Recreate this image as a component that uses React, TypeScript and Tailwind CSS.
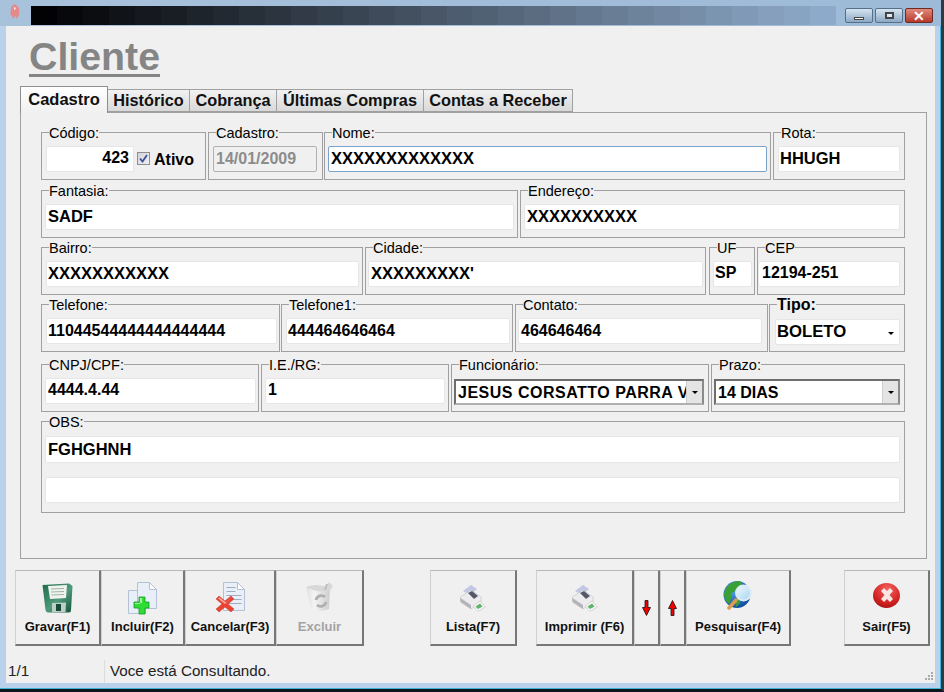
import type { ReactNode } from 'react';

const FONT = "font-['Liberation_Sans',Arial,sans-serif]";

// title bar fades from black to the frame blue in visible steps
const bands = Array.from({ length: 31 }, (_, i) => {
  const t = i / 30;
  const r = Math.round(2 + t * 140);
  const g = Math.round(2 + t * 168);
  const b = Math.round(4 + t * 198);
  return `rgb(${r},${g},${b})`;
});

function Group({ label, className, labelClass, children }: { label: string; className: string; labelClass?: string; children?: ReactNode }) {
  return (
    <div className={`relative border border-[#a0a0a0] h-[48px] pt-[13px] ${className}`}>
      <span className={`absolute -top-[7px] left-[7px] bg-[#f0f0f0] leading-[14px] ${labelClass ?? 'text-[14.5px]'} text-black whitespace-nowrap`}>{label}</span>
      {children}
    </div>
  );
}

function Input({ value, className, right, wide }: { value: string; className: string; right?: boolean; wide?: boolean }) {
  return (
    <div className={`h-[26px] bg-white border border-[#e6e6e6] rounded-[2px] font-bold text-black leading-[22px] px-[2px] whitespace-nowrap overflow-hidden ${wide ? 'text-[16.5px]' : 'text-[16px]'} ${right ? 'text-right pr-[4px]' : ''} ${className}`}>
      {value}
    </div>
  );
}

function Combo({ value, className, textClass }: { value: string; className: string; textClass?: string }) {
  return (
    <div className={`h-[26px] flex bg-white border-2 border-t-[#6e6e6e] border-l-[#6e6e6e] border-b-[#b0b0b0] border-r-[#8a8a8a] ${className}`}>
      <div className={`flex-1 overflow-hidden whitespace-nowrap text-[16px] font-bold leading-[24px] pl-[2px] ${textClass ?? ''}`}>{value}</div>
      <div className="w-[16px] bg-[#e4e4e4] border-l border-[#cfcfcf] flex items-center justify-center">
        <div className="w-0 h-0 border-l-[3px] border-r-[3px] border-t-[3px] border-l-transparent border-r-transparent border-t-black" />
      </div>
    </div>
  );
}

function ToolButton({ label, className, disabled, children }: { label?: string; className: string; disabled?: boolean; children?: ReactNode }) {
  return (
    <div className={`h-[76px] shrink-0 flex flex-col items-center bg-[#f0f0f0] border-t border-l border-t-[#b8b8b8] border-l-[#d0d0d0] border-r-2 border-b-2 border-r-[#777] border-b-[#777] ${className}`}>
      <div className="h-[44px] flex items-end justify-center">{children}</div>
      {label && <span className={`mt-[5px] text-[13px] font-bold leading-[14px] whitespace-nowrap ${disabled ? 'text-[#a3a3a3]' : 'text-[#111]'}`}>{label}</span>}
    </div>
  );
}

function Floppy() {
  return (
    <svg width="31" height="30" viewBox="0 0 31 30" className="mb-[2px]">
      <defs>
        <linearGradient id="disk" x1="0" y1="0" x2="1" y2="1">
          <stop offset="0%" stopColor="#1f6a4a" />
          <stop offset="55%" stopColor="#4f9a7a" />
          <stop offset="100%" stopColor="#14503a" />
        </linearGradient>
      </defs>
      <path d="M0.5 2 L27 0.5 L30.5 3 L29 27 Q29 29.5 27 29.5 L6 29.5 Q4 29.5 3.5 27 Z" fill="url(#disk)" />
      <path d="M6 3 L25 2 L24 15 L8 16 Z" fill="#f0f4f0" />
      <path d="M9 6 L22 5.5 M9 9 L22 8.5 M9.5 12 L22 11.5" stroke="#9fb0a6" />
      <path d="M10 20 L24 19.5 L23.5 29 L10 29 Z" fill="#bcd0c6" />
      <path d="M14 21 L19 21 L19 28 L14 28 Z" fill="#17493a" />
    </svg>
  );
}

function Sheet({ x, y, w, h, lines }: { x: number; y: number; w: number; h: number; lines?: boolean }) {
  return (
    <g>
      <path d={`M${x} ${y} H${x + w - 7} L${x + w} ${y + 7} V${y + h} H${x} Z`} fill="#e9eff8" stroke="#b4c0d4" />
      <path d={`M${x + w - 7} ${y} V${y + 7} H${x + w} Z`} fill="#fff" stroke="#b4c0d4" />
      {lines && <path d={`M${x + 3} ${y + 5} H${x + w - 9} M${x + 3} ${y + 9} H${x + w - 9} M${x + 3} ${y + 13} H${x + w - 3} M${x + 3} ${y + 17} H${x + w - 3} M${x + 3} ${y + 21} H${x + w - 3}`} stroke="#a0adbe" />}
    </g>
  );
}

function DocPlus() {
  return (
    <svg width="30" height="33" viewBox="0 0 30 33">
      <Sheet x={0.5} y={8.5} w={17} h={23} />
      <Sheet x={9.5} y={0.5} w={19} h={26} />
      <path d="M11 15 H17 V20 H21 V26 H17 V32 H11 V26 H6 V20 H11 Z" fill="#2edc34" stroke="#159a28" strokeWidth="0.8" />
      <path d="M12 16 H14 V21 H7 V22 H12 Z" fill="#a5f2a5" />
    </svg>
  );
}

function DocX() {
  return (
    <svg width="30" height="30" viewBox="0 0 30 30" className="mb-[3px]">
      <Sheet x={8.5} y={0.5} w={21} h={28} lines />
      <path d="M1 17 L4 14 L10 19 L16 14 L19 17 L13 22 L19 27 L16 30 L10 25 L4 30 L1 27 L7 22 Z" fill="#ea4334" stroke="#c5372a" strokeWidth="0.5" />
      <path d="M3 16.5 L4.5 15.5 L11 20.5 L16 16 L10 22 Z" fill="#f7a79e" />
    </svg>
  );
}

function Bin() {
  return (
    <svg width="29" height="30" viewBox="0 0 29 30" className="mb-[3px]">
      <defs>
        <linearGradient id="binBody" x1="0" y1="0" x2="1" y2="0">
          <stop offset="0%" stopColor="#dedede" />
          <stop offset="35%" stopColor="#f4f4f4" />
          <stop offset="100%" stopColor="#cdcdcd" />
        </linearGradient>
      </defs>
      <path d="M1 5 L25 4 L24 27 Q14 31 6 27 Z" fill="url(#binBody)" />
      <path d="M1 5 Q12 1 20 5 L24 0 L28 4 L25 9 Q12 11 1 5 Z" fill="#d8d8d8" />
      <path d="M20 8 L22 2" stroke="#bdbdbd" strokeWidth="2" />
      <path d="M11 18 A5.5 5.5 0 0 1 20 15 M21 20 A5.5 5.5 0 0 1 12 23" fill="none" stroke="#b0b0b0" strokeWidth="2.8" />
    </svg>
  );
}

function PrinterIcon() {
  return (
    <svg width="26" height="28" viewBox="0 0 26 28" className="mb-[3px]">
      <path d="M3 7 L11 1 L17 5 L10 11 Z" fill="#c2c7e6" />
      <path d="M0.5 13 L11 6 L21 13 V18 L11 25 L0.5 18 Z" fill="#ececee" stroke="#b8b8b8" strokeWidth="0.5" />
      <path d="M8 9 L12 7 L18 12 L14 15 Z" fill="#55586a" />
      <path d="M0.5 18 L11 25 V21 L0.5 14 Z" fill="#b4b4b8" />
      <path d="M13 22 L20 17 L25.5 23 L18 27.5 Z" fill="#f5f5f5" stroke="#bbbbbb" strokeWidth="0.5" />
      <path d="M15.5 22.5 L20 19.5 L22.5 22.5 L18 25 Z" fill="#5fb56a" />
    </svg>
  );
}

function GlobeSearch() {
  return (
    <svg width="30" height="29" viewBox="0 0 30 29" className="mb-[5px]">
      <defs>
        <radialGradient id="globe" cx="35%" cy="30%" r="75%">
          <stop offset="0%" stopColor="#56a8ee" />
          <stop offset="100%" stopColor="#0c4a9c" />
        </radialGradient>
        <linearGradient id="lens" x1="0" y1="0" x2="1" y2="1">
          <stop offset="0%" stopColor="#f2fbff" />
          <stop offset="100%" stopColor="#a5d3f0" />
        </linearGradient>
      </defs>
      <circle cx="14" cy="13.5" r="13.5" fill="url(#globe)" />
      <path d="M3 7 Q9 -1 18 0.5 Q20 4 15 6 Q13 11 8 12 Q9 17 6 23 Q-2 16 3 7 Z" fill="#3aa036" />
      <path d="M12 18 Q17 17 17 22 L13 26 Z" fill="#3aa036" />
      <path d="M13 19 L6 27" stroke="#dd9d4e" strokeWidth="3.5" strokeLinecap="round" />
      <circle cx="20.5" cy="12" r="7.5" fill="url(#lens)" stroke="#dcecf5" strokeWidth="2" />
    </svg>
  );
}

function ExitBall() {
  return (
    <svg width="27" height="25" viewBox="0 0 27 25" className="mb-[7px]">
      <defs>
        <radialGradient id="ball" cx="55%" cy="25%" r="80%">
          <stop offset="0%" stopColor="#f4625f" />
          <stop offset="70%" stopColor="#d02020" />
          <stop offset="100%" stopColor="#a01414" />
        </radialGradient>
      </defs>
      <ellipse cx="13.5" cy="12.5" rx="13.5" ry="12.5" fill="url(#ball)" />
      <path d="M8 8 L11 5 L14 8 L17 5 L20 8 L16.5 12 L20 16 L17 19 L14 16 L11 19 L8 16 L11.5 12 Z" fill="#f8e6e4" />
    </svg>
  );
}

function RedArrow({ up }: { up?: boolean }) {
  return (
    <svg width="9" height="16" viewBox="0 0 9 16" className={`-mb-[1px] ${up ? '' : 'rotate-180'}`}>
      <path d="M4.5 0.5 L8.5 8.5 H6 V15.5 H3 V8.5 H0.5 Z" fill="#f00000" stroke="#111" strokeWidth="0.8" />
    </svg>
  );
}

function CaptionButton({ className, children }: { className: string; children: ReactNode }) {
  return (
    <div className={`w-[28px] h-[15px] flex items-center justify-center border rounded-[2px] ${className}`}>{children}</div>
  );
}

export default function App() {
  return (
    <div className={`w-[944px] h-[692px] overflow-hidden border-r-[3px] border-b-[3px] border-r-[#2b3a45] border-b-[#0e151b] ${FONT}`}>
      <div className="h-full flex flex-col bg-[#b9d1ea] shadow-[inset_-1px_-1px_0_#3fb4d4]">
        {/* title bar */}
        <div className="h-[26px] shrink-0 flex pt-[6px] bg-gradient-to-r from-[#a9c2dc] via-[#a2bdd9] to-[#9dbad8]">
          <div className="w-[31px] shrink-0 flex justify-center">
            <svg width="12" height="16" viewBox="0 0 12 16" className="-mt-[2px] -ml-[1px]">
              <path d="M4 1 Q7 -1 8 2 Q11 4 10 8 Q11 11 9 12 L8 15 L6 12 L4 15 L3 12 Q0 10 2 7 Q1 3 4 1 Z" fill="#e58a8a" />
              <path d="M5 3 Q7 3 7 5 L5 6 Z" fill="#fbdede" />
            </svg>
          </div>
          <div className="w-[805px] h-[19px] flex">
            {bands.map((c) => (
              <div key={c} className="flex-1" style={{ backgroundColor: c }} />
            ))}
          </div>
          <div className="flex pl-[9px] gap-[2px] mt-[2px]">
            <CaptionButton className="border-[#55708a] bg-gradient-to-b from-[#d5e3f0] to-[#8ea9c4]">
              <div className="w-[10px] h-[3px] mt-[6px] bg-white border border-[#444]" />
            </CaptionButton>
            <CaptionButton className="border-[#55708a] bg-gradient-to-b from-[#d5e3f0] to-[#8ea9c4]">
              <div className="w-[9px] h-[7px] bg-white/60 border-2 border-[#444]" />
            </CaptionButton>
            <CaptionButton className="border-[#6e2b22] bg-gradient-to-b from-[#e0897c] to-[#b5372a]">
              <span className="text-white text-[14px] font-bold leading-none">✕</span>
            </CaptionButton>
          </div>
        </div>

        {/* window body */}
        <div className="ml-[6px] w-[929px] h-[657px] shrink-0 bg-[#f0f0f0] flex flex-col">
          <div className="h-[60px] shrink-0 pl-[23px] pt-[9px]">
            <span className="text-[39.3px] font-bold leading-[43px] text-[#858585] underline decoration-[3px] underline-offset-[4px]">Cliente</span>
          </div>

          {/* tabs */}
          <div className="ml-[14px] h-[26px] flex items-end relative z-10 text-[16.3px] font-bold text-[#111]">
            <div className="w-[88px] h-[27px] -mb-[1px] bg-gradient-to-b from-white to-[#f0f0f0] border border-[#8e8e8e] border-b-0 text-center leading-[24px] text-[16.5px]">Cadastro</div>
            <div className="w-[82px] h-[23px] bg-gradient-to-b from-[#f2f2f2] to-[#d9d9d9] border border-[#a0a0a0] border-l-0 text-center leading-[21px]">Histórico</div>
            <div className="w-[87px] h-[23px] bg-gradient-to-b from-[#f2f2f2] to-[#d9d9d9] border border-[#a0a0a0] border-l-0 text-center leading-[21px]">Cobrança</div>
            <div className="w-[147px] h-[23px] bg-gradient-to-b from-[#f2f2f2] to-[#d9d9d9] border border-[#a0a0a0] border-l-0 text-center leading-[21px]">Últimas Compras</div>
            <div className="w-[149px] h-[23px] bg-gradient-to-b from-[#f2f2f2] to-[#d9d9d9] border border-[#a0a0a0] border-l-0 text-center leading-[21px]">Contas a Receber</div>
          </div>

          {/* tab page */}
          <div className="ml-[14px] w-[907px] h-[447px] shrink-0 border border-[#a0a0a0] pl-[20px] pt-[19px]">
            <div className="flex">
              <Group label="Código:" className="w-[165px] flex items-start pl-[4px]">
                <Input value="423" right className="w-[88px]" />
                <div className="ml-[3px] mt-[6px] w-[13px] h-[13px] border border-[#8e8f8f] bg-gradient-to-br from-[#d4d4d8] to-[#f0f0f4] flex items-center justify-center">
                  <svg width="9" height="9" viewBox="0 0 9 9">
                    <path d="M1 4.5 L3.5 7.5 L8 1" fill="none" stroke="#3f4f96" strokeWidth="1.8" />
                  </svg>
                </div>
                <span className="ml-[4px] mt-[3px] text-[16px] font-bold leading-[22px]">Ativo</span>
              </Group>
              <Group label="Cadastro:" className="ml-[2px] w-[115px] pl-[4px]">
                <div className="w-[104px] h-[26px] bg-[#f0f0f0] border border-[#b0b0b0] rounded-[2px] text-[16px] font-bold text-[#8c8c8c] leading-[23px] px-[2px]">14/01/2009</div>
              </Group>
              <Group label="Nome:" className="ml-[1px] w-[447px] pl-[3px]">
                <Input value="XXXXXXXXXXXXX" wide className="w-[439px] !border-[#7ba2c9]" />
              </Group>
              <Group label="Rota:" className="ml-[2px] w-[132px] pl-[4px]">
                <Input value="HHUGH" wide className="w-[122px] !pl-[1px]" />
              </Group>
            </div>

            <div className="flex mt-[10px]">
              <Group label="Fantasia:" className="w-[477px] pl-[3px]">
                <Input value="SADF" wide className="w-[469px]" />
              </Group>
              <Group label="Endereço:" className="ml-[2px] w-[385px] pl-[3px]">
                <Input value="XXXXXXXXXX" wide className="w-[376px]" />
              </Group>
            </div>

            <div className="flex mt-[9px]">
              <Group label="Bairro:" className="w-[322px] pl-[4px]">
                <Input value="XXXXXXXXXXX" wide className="w-[313px] !pl-[1px]" />
              </Group>
              <Group label="Cidade:" className="ml-[2px] w-[341px] pl-[2px]">
                <Input value="XXXXXXXXX'" wide className="w-[335px]" />
              </Group>
              <Group label="UF" className="ml-[3px] w-[46px] pl-[3px]">
                <Input value="SP" className="w-[39px] !pl-[1px]" />
              </Group>
              <Group label="CEP" className="ml-[2px] w-[148px] pl-[0px]">
                <Input value="12194-251" className="w-[142px] !pl-[3px]" />
              </Group>
            </div>

            <div className="flex mt-[9px]">
              <Group label="Telefone:" className="w-[239px] pl-[4px]">
                <Input value="11044544444444444444" className="w-[231px] !pl-[1px] !leading-[24px]" />
              </Group>
              <Group label="Telefone1:" className="ml-[1px] w-[232px] pl-[4px]">
                <Input value="444464646464" className="w-[224px] !pl-[1px] !leading-[24px]" />
              </Group>
              <Group label="Contato:" className="ml-[2px] w-[253px] pl-[2px]">
                <Input value="464646464" className="w-[244px] !leading-[24px]" />
              </Group>
              <Group label="Tipo:" labelClass="text-[16px] font-bold" className="ml-[1px] w-[136px] pl-[5px] pt-[14px]">
                <div className="w-[125px] h-[26px] bg-white border border-[#e6e6e6] rounded-[2px] flex items-center justify-between text-[16.7px] font-bold pl-[1px] pr-[5px]">
                  BOLETO
                  <div className="w-0 h-0 mt-[2px] border-l-[3px] border-r-[3px] border-t-[3px] border-l-transparent border-r-transparent border-t-black" />
                </div>
              </Group>
            </div>

            <div className="flex mt-[12px]">
              <Group label="CNPJ/CPF:" className="w-[218px] pl-[3px]">
                <Input value="4444.4.44" className="w-[211px]" />
              </Group>
              <Group label="I.E./RG:" className="ml-[2px] w-[188px] pl-[3px]">
                <Input value="1" className="w-[180px]" />
              </Group>
              <Group label="Funcionário:" className="ml-[2px] w-[258px] pl-[2px] pt-[14px]">
                <Combo value="JESUS CORSATTO PARRA V" textClass="tracking-[0.5px]" className="w-[250px]" />
              </Group>
              <Group label="Prazo:" className="ml-[2px] w-[194px] pl-[2px] pt-[14px]">
                <Combo value="14 DIAS" className="w-[186px]" />
              </Group>
            </div>

            <Group label="OBS:" className="mt-[9px] w-[864px] !h-[92px] pl-[3px] pt-[14px]">
              <Input value="FGHGHNH" wide className="w-[855px] !h-[27px] !leading-[24px]" />
              <Input value="" className="w-[855px] mt-[14px]" />
            </Group>
          </div>

          {/* toolbar */}
          <div className="flex mt-[11px] pl-[9px]">
            <ToolButton label="Gravar(F1)" className="w-[86px]"><Floppy /></ToolButton>
            <ToolButton label="Incluir(F2)" className="w-[84px]"><DocPlus /></ToolButton>
            <ToolButton label="Cancelar(F3)" className="w-[91px]"><DocX /></ToolButton>
            <ToolButton label="Excluir" disabled className="w-[88px]"><Bin /></ToolButton>
            <ToolButton label="Lista(F7)" className="ml-[66px] w-[87px]"><PrinterIcon /></ToolButton>
            <ToolButton label="Imprimir (F6)" className="ml-[19px] w-[98px]"><PrinterIcon /></ToolButton>
            <ToolButton className="w-[26px]"><RedArrow /></ToolButton>
            <ToolButton className="w-[26px]"><RedArrow up /></ToolButton>
            <ToolButton label="Pesquisar(F4)" className="w-[105px]"><GlobeSearch /></ToolButton>
            <ToolButton label="Sair(F5)" className="ml-[53px] w-[86px]"><ExitBall /></ToolButton>
          </div>

          {/* status bar */}
          <div className="flex mt-[14px] h-[23px] text-[15.2px] text-[#222] leading-[22px] relative">
            <div className="w-[99px] pl-[2px] border-r border-[#dcdcdc]">1/1</div>
            <div className="pl-[5px]">Voce está Consultando.</div>
            <div className="absolute right-[2px] bottom-[3px] w-[8px] h-[8px] grid grid-cols-3 gap-[1px]">
              <span /><span /><span className="bg-[#aaa]" />
              <span /><span className="bg-[#aaa]" /><span className="bg-[#aaa]" />
              <span className="bg-[#aaa]" /><span className="bg-[#aaa]" /><span className="bg-[#aaa]" />
            </div>
          </div>
        </div>
      </div>
    </div>
  );
}
